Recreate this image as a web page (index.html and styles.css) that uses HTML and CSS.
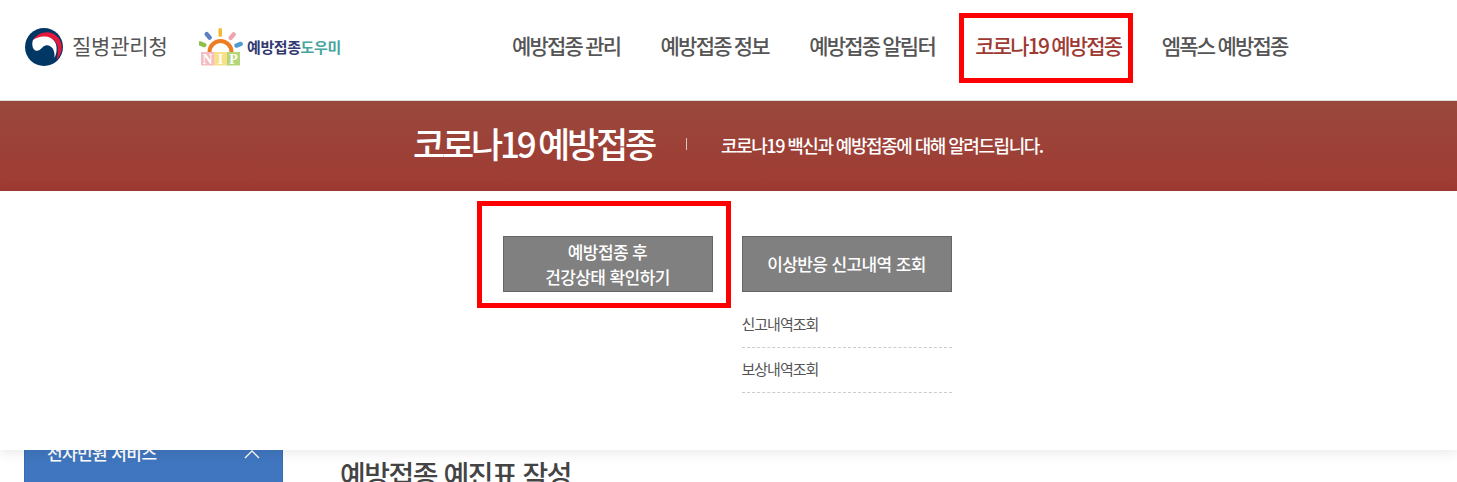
FILE: index.html
```html
<!DOCTYPE html>
<html lang="ko">
<head>
    <meta charset="UTF-8">
    <meta name="viewport" content="width=device-width, initial-scale=1.0">
    <title>코로나19 예방접종</title>
    <link rel="stylesheet" href="styles.css">
</head>
<body>

<header class="header">
    <div class="logo-kdca">
        <svg class="taegeuk" width="38" height="38" viewBox="0 0 38 38">
            <circle cx="19" cy="19" r="19" fill="#003764"/>
            <path d="M7.500 12.500C11 8.500 16 7 20.500 7.500 26 8.500 31 13 31.500 19c.5 4-.5 8-2 11 .3-4-.3-7-1.800-9.500-1.500-2.200-3.700-3.500-6.200-3.300-2.500.3-4 2-5.500 3.600-1.300 1.300-3 2.200-4.700 1.900-2.800-.5-4-3.700-4-6.700 0-1.500.2-2.500.7-3.500z" fill="#fff"/>
            <path d="M8 11.800C11 7 17 4 23 4.300 31 5 37 12 36.800 19.500c-.1 5-2.300 9.500-5.300 12.500 1-4 1.700-9 1.200-13C31.700 13 26.500 9 20.500 8.500 16 8 11.500 9.500 8 11.800z" fill="#e6173d"/>
        </svg>
        <span class="kdca-name">질병관리청</span>
    </div>
    <div class="logo-nip">
        <svg class="nip-mark" width="46" height="38" viewBox="0 0 46 38">
            <rect x="19.500" y="0" width="3.500" height="9" rx="1.700" fill="#f5b82e"/>
            <rect x="7" y="3.500" width="4.500" height="9" rx="2.200" fill="#5b7fc4" transform="rotate(-40 9 8)"/>
            <rect x="31" y="3.500" width="4.500" height="9" rx="2.200" fill="#f0a5ae" transform="rotate(40 33 8)"/>
            <rect x="1" y="12" width="4.500" height="9" rx="2.200" fill="#8fc04a" transform="rotate(-70 3 16.500)"/>
            <rect x="37.500" y="12" width="4.500" height="9" rx="2.200" fill="#4f9bd4" transform="rotate(70 39.500 16.500)"/>
            <path d="M8.500 24a13 13 0 0 1 26 0h-4a9 9 0 0 0-18 0z" fill="#ee7d22"/>
            <rect x="2" y="24" width="13" height="13.500" fill="#f6bcc3"/>
            <rect x="15" y="24" width="13" height="13.500" fill="#f8e08a"/>
            <rect x="28" y="24" width="13" height="13.500" fill="#b4d67a"/>
            <text x="8.500" y="36" class="nip-letter" fill="#fff">N</text>
            <text x="21.500" y="36" class="nip-letter" fill="#fff">I</text>
            <text x="34.500" y="36" class="nip-letter" fill="#fff">P</text>
        </svg>
        <span class="nip-name">예방접종<em>도우미</em></span>
    </div>
    <nav class="gnb">
        <a href="#">예방접종 관리</a>
        <a href="#">예방접종 정보</a>
        <a href="#">예방접종 알림터</a>
        <a href="#" class="on">코로나19 예방접종</a>
        <a href="#">엠폭스 예방접종</a>
    </nav>
    <div class="mark mark-nav"></div>
</header>

<div class="banner">
    <h2>코로나19 예방접종</h2>
    <span class="banner-bar"></span>
    <p>코로나19 백신과 예방접종에 대해 알려드립니다.</p>
</div>

<div class="submenu">
    <div class="sub-col">
        <a href="#" class="sub-btn">예방접종 후<br>건강상태 확인하기</a>
        <div class="mark mark-btn"></div>
    </div>
    <div class="sub-col">
        <a href="#" class="sub-btn">이상반응 신고내역 조회</a>
        <ul class="sub-list">
            <li>신고내역조회</li>
            <li>보상내역조회</li>
        </ul>
    </div>
</div>

<div class="content">
    <aside class="side">
        <span>전자민원 서비스</span>
        <svg class="side-arrow" width="16" height="9" viewBox="0 0 16 9"><path d="M1 8l7-7 7 7" fill="none" stroke="#fff" stroke-width="1.300"/></svg>
    </aside>
    <h3>예방접종 예진표 작성</h3>
</div>

</body>
</html>
```

FILE: styles.css
```css
html, body {
    margin: 0;
    padding: 0;
    height: 482px;
    overflow: hidden;
    background-color: #fff;
    font-family: "Noto Sans CJK KR", "Noto Sans", sans-serif;
}
a {
    text-decoration: none;
    color: inherit;
}
.header {
    position: relative;
    display: flex;
    align-items: center;
    height: 94px;
    padding: 0 0 6px 25px;
    border-bottom: 1px solid #ddd;
}
.logo-kdca {
    display: flex;
    align-items: center;
    width: 174px;
}
.taegeuk {
    margin-right: 9px;
}
.kdca-name {
    margin-bottom: 4px;
    font-size: 21px;
    color: #555;
    letter-spacing: -0.2px;
}
.logo-nip {
    display: flex;
    align-items: center;
    width: 313px;
}
.nip-mark {
    margin-right: 2px;
}
.nip-letter {
    font-family: "Liberation Serif", serif;
    font-size: 14px;
    font-weight: 700;
    text-anchor: middle;
}
.nip-name {
    margin-bottom: 2px;
    font-size: 15px;
    font-weight: 700;
    color: #333a72;
    letter-spacing: -0.4px;
}
.nip-name em {
    font-style: normal;
    color: #46a59c;
}
.gnb {
    display: flex;
    gap: 40.4px;
    padding-bottom: 4px;
    font-size: 21px;
    font-weight: 500;
    color: #555;
    letter-spacing: -1.8px;
    word-spacing: -1px;
}
.gnb .on {
    color: #9e3a34;
}
.mark {
    position: absolute;
    border: 5px solid #f00;
    box-sizing: border-box;
}
.mark-nav {
    left: 959px;
    top: 13px;
    width: 174px;
    height: 70px;
}
.banner {
    display: flex;
    align-items: center;
    height: 90px;
    padding-left: 413px;
    background: linear-gradient(#99493c, #a03a33);
    color: #fff;
}
.banner h2 {
    margin: 0 0 7px;
    width: 273px;
    font-size: 35px;
    font-weight: 500;
    letter-spacing: -3.2px;
    word-spacing: -2px;
    white-space: nowrap;
}
.banner-bar {
    width: 1px;
    height: 12px;
    margin: 0 34px 4px 0;
    background-color: #d9c4c0;
}
.banner p {
    margin: 0 0 2px;
    font-size: 18px;
    font-weight: 500;
    letter-spacing: -1.45px;
    word-spacing: -0.3px;
}
.submenu {
    position: relative;
    z-index: 2;
    display: flex;
    justify-content: center;
    gap: 29px;
    height: 214px;
    padding: 45px 3px 0 0;
    background-color: #fff;
    box-shadow: 0 2px 12px rgba(0, 0, 0, 0.1);
}
.sub-col {
    position: relative;
    width: 210px;
}
.sub-btn {
    display: flex;
    align-items: center;
    justify-content: center;
    box-sizing: border-box;
    height: 56px;
    padding-bottom: 1px;
    border: 1px solid #666;
    background-color: #808080;
    color: #fff;
    font-size: 17px;
    font-weight: 500;
    line-height: 25px;
    letter-spacing: -0.6px;
    text-align: center;
}
.mark-btn {
    left: -26px;
    top: -35px;
    width: 254px;
    height: 107px;
}
.sub-list {
    list-style: none;
    margin: 11px 0 0;
    padding: 0;
}
.sub-list li {
    height: 44px;
    line-height: 42px;
    border-bottom: 1px dashed #ccc;
    font-size: 15px;
    color: #555;
    letter-spacing: -1px;
}
.content {
    display: flex;
    height: 32px;
    padding-left: 24px;
    overflow: hidden;
}
.side {
    display: flex;
    align-items: flex-start;
    justify-content: space-between;
    box-sizing: border-box;
    width: 259px;
    height: 60px;
    margin-top: -21px;
    padding: 10px 22px 0;
    border: 1px solid #3a6cae;
    background-color: #4076bf;
    color: #fff;
    font-size: 17px;
    font-weight: 500;
    letter-spacing: -0.6px;
}
.side-arrow {
    margin-top: 10px;
}
.content h3 {
    margin: 6px 0 0 57px;
    font-size: 28px;
    font-weight: 500;
    line-height: 36px;
    color: #444;
    letter-spacing: -1.5px;
    white-space: nowrap;
}
```
